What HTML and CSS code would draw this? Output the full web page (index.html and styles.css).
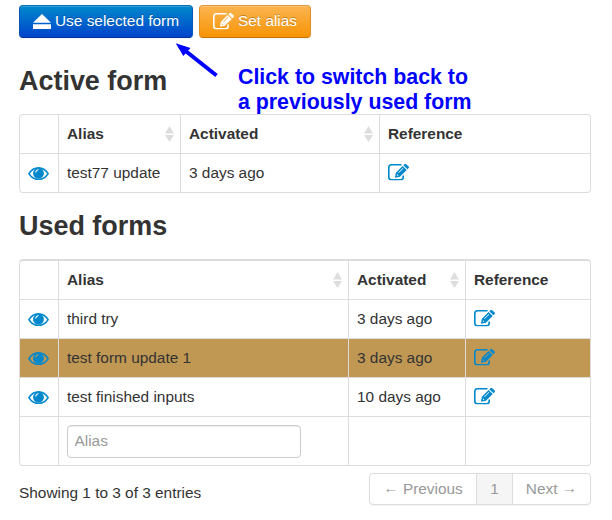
FILE: index.html
```
<!DOCTYPE html>
<html lang="en">
<head>
<meta charset="utf-8">
<title>Forms</title>
<link rel="stylesheet" href="styles.css">
</head>
<body>
<svg class="defs" aria-hidden="true">
  <symbol id="edit" viewBox="0 0 21 16.500"><path d="M13.500 .8H3.500Q.8 .8 .8 3.500V13Q.8 15.700 3.500 15.700H12.500Q15.200 15.700 15.200 13V11.500" fill="none" stroke="currentColor" stroke-width="1.600"/><path fill-rule="evenodd" d="M6.900 13.700L7.900 8.700 14.600 2 18.700 5.900 11.900 12.700zM8.800 11.900L10.400 11.500 9.200 10.300zM10.700 9L15.300 4.400 14.800 3.900 10.200 8.500zM15.300 1.300L16.700 .1Q17.500-.4 18.200 .2L20.700 2.600Q21.200 3.300 20.700 3.900L19.400 5.200z"/></symbol>
  <symbol id="eye" viewBox="0 0 21 13.500"><path d="M.9 6.700Q4.500 .9 10.500 .9T20.100 6.700Q16.500 12.500 10.500 12.500T.9 6.700z" fill="none" stroke="currentColor" stroke-width="1.600"/><path fill-rule="evenodd" d="M10.500 .9A5.400 5.400 0 1 1 10.490 .9zM10.600 2.300Q7.300 2.500 7.200 5.600L8 5.800Q8.300 3.500 10.600 3.100z"/></symbol>
  <symbol id="sort" viewBox="0 0 9 16"><path d="M4.500 0L9 7.500H0zM0 9h9L4.500 16z"/></symbol>
</svg>

<div class="toolbar">
  <button class="btn btn-primary"><svg class="eject" viewBox="0 0 18 15"><path d="M9 0l9 8.800H0zM0 10.200H18V15H0z"/></svg><span>Use selected form</span></button>
  <button class="btn btn-warning"><svg class="edit"><use href="#edit"/></svg><span>Set alias</span></button>
</div>

<h2>Active form</h2>
<table class="grid">
  <colgroup><col class="c-icon"><col class="c-alias-a"><col class="c-date-a"><col></colgroup>
  <tr><th></th><th><div class="head">Alias<svg class="sort"><use href="#sort"/></svg></div></th><th><div class="head">Activated<svg class="sort"><use href="#sort"/></svg></div></th><th>Reference</th></tr>
  <tr><td><svg class="eye"><use href="#eye"/></svg></td><td>test77 update</td><td>3 days ago</td><td><svg class="edit"><use href="#edit"/></svg></td></tr>
</table>

<h2 class="second">Used forms</h2>
<table class="grid used">
  <colgroup><col class="c-icon"><col class="c-alias-u"><col class="c-date-u"><col></colgroup>
  <tr><th></th><th><div class="head">Alias<svg class="sort"><use href="#sort"/></svg></div></th><th><div class="head">Activated<svg class="sort"><use href="#sort"/></svg></div></th><th>Reference</th></tr>
  <tr><td><svg class="eye"><use href="#eye"/></svg></td><td>third try</td><td>3 days ago</td><td><svg class="edit"><use href="#edit"/></svg></td></tr>
  <tr class="selected"><td><svg class="eye"><use href="#eye"/></svg></td><td>test form update 1</td><td>3 days ago</td><td><svg class="edit"><use href="#edit"/></svg></td></tr>
  <tr><td><svg class="eye"><use href="#eye"/></svg></td><td>test finished inputs</td><td>10 days ago</td><td><svg class="edit"><use href="#edit"/></svg></td></tr>
  <tr class="filter"><td></td><td><input type="text" placeholder="Alias"></td><td></td><td></td></tr>
</table>

<div class="footer">
  <div class="info">Showing 1 to 3 of 3 entries</div>
  <div class="pagination"><span class="prev"><span class="dir">←</span> Previous</span><span class="page">1</span><span class="next">Next <span class="dir">→</span></span></div>
</div>

<svg class="arrow" viewBox="0 0 44 36"><path d="M.700 1.300L15.500 6 8.300 14z"/><path class="shaft" d="M10 8.500L41.500 33.500"/></svg>
<div class="note">Click to switch back to<br>a previously used form</div>
</body>
</html>
```
FILE: styles.css
```
* { box-sizing: border-box; }
body {
  position: relative;
  margin: 0;
  padding: 5px 21px 0 19px;
  height: 520px;
  overflow: hidden;
  background: #fff;
  color: #333;
  font: 15.4px/20px "Liberation Sans", Arial, sans-serif;
}
svg { display: block; fill: currentColor; }
.defs { position: absolute; width: 0; height: 0; }

.toolbar { display: flex; gap: 6px; }
.btn {
  display: flex;
  align-items: center;
  height: 33px;
  padding: 0 0 1px 13px;
  border: 1px solid;
  border-radius: 4px;
  color: #fff;
  font: inherit;
  white-space: nowrap;
  text-shadow: 0 -1px 0 rgba(0, 0, 0, .25);
  box-shadow: inset 0 1px 0 rgba(255, 255, 255, .2), 0 1px 2px rgba(0, 0, 0, .05);
}
.btn-primary {
  width: 174px;
  background: linear-gradient(#0088cc, #0044cc);
  border-color: #0671b4 #0a55b3 #003399;
}
.btn-warning {
  width: 112px;
  background: linear-gradient(#fbb450, #f89406);
  border-color: #e09a3c #dd8d22 #c67605;
}
.eject { width: 18px; height: 15px; margin: 1px 4px 0 0; }
.btn .edit { margin-right: 4px; }
.edit { width: 21px; height: 16.5px; overflow: visible; }
.eye { width: 21px; height: 13.5px; }

h2 {
  margin: 23px 0 13px;
  font-size: 26.95px;
  line-height: 40px;
  font-weight: bold;
}
h2.second { margin: 13px 0 13px; }

.grid {
  width: 572px;
  table-layout: fixed;
  border: 1px solid #ddd;
  border-left: 0;
  border-radius: 4px;
  border-collapse: separate;
  border-spacing: 0;
  font-size: 15.4px;
}
.used { border-top-width: 2px; }
.c-icon { width: 39px; }
.c-alias-a { width: 122px; }
.c-date-a { width: 199px; }
.c-alias-u { width: 290px; }
.c-date-u { width: 117px; }
.grid th, .grid td {
  height: 38px;
  padding: 0 0 0 8px;
  border-left: 1px solid #ddd;
  text-align: left;
  vertical-align: middle;
}
.grid tr + tr td { height: 39px; border-top: 1px solid #ddd; }
.grid tr:first-child th:first-child { border-top-left-radius: 4px; }
.grid tr:last-child td:first-child { border-bottom-left-radius: 4px; }
.grid td svg { color: #0088cc; }
.grid td .eye { margin: 1px 0 0; }
.grid td .edit { margin-top: -2px; }
.head { display: flex; align-items: center; justify-content: space-between; padding-right: 6px; }
.sort { width: 9px; height: 16px; color: #ddd; }
.selected td { background: #c09853; }
.grid tr.filter td { height: 49px; }
input {
  display: block;
  width: 234px;
  height: 33px;
  padding: 0 6.5px 1px;
  border: 1px solid #ccc;
  border-radius: 4px;
  box-shadow: inset 0 1px 1px rgba(0, 0, 0, .075);
  font: inherit;
}
input::placeholder { color: #999; }

.footer { display: flex; justify-content: space-between; margin-top: 7px; }
.info { margin-top: 10px; }
.pagination {
  display: flex;
  width: 222px;
  height: 32px;
  border: 1px solid #ddd;
  border-radius: 4px;
  box-shadow: 0 1px 2px rgba(0, 0, 0, .05);
  color: #999;
  line-height: 30px;
  text-align: center;
}
.prev { width: 106px; }
.page { width: 37px; background: #f5f5f5; border: solid #ddd; border-width: 0 1px; }
.next { flex: 1; }
.dir { position: relative; top: -1px; }

.arrow { position: absolute; left: 175px; top: 42px; width: 44px; height: 36px; color: #00f; }
.shaft { stroke: #00f; stroke-width: 4; fill: none; }
.note {
  position: absolute;
  left: 238px;
  top: 65px;
  color: #00f;
  font-size: 21.33px;
  line-height: 25px;
  font-weight: bold;
  white-space: nowrap;
}
```
